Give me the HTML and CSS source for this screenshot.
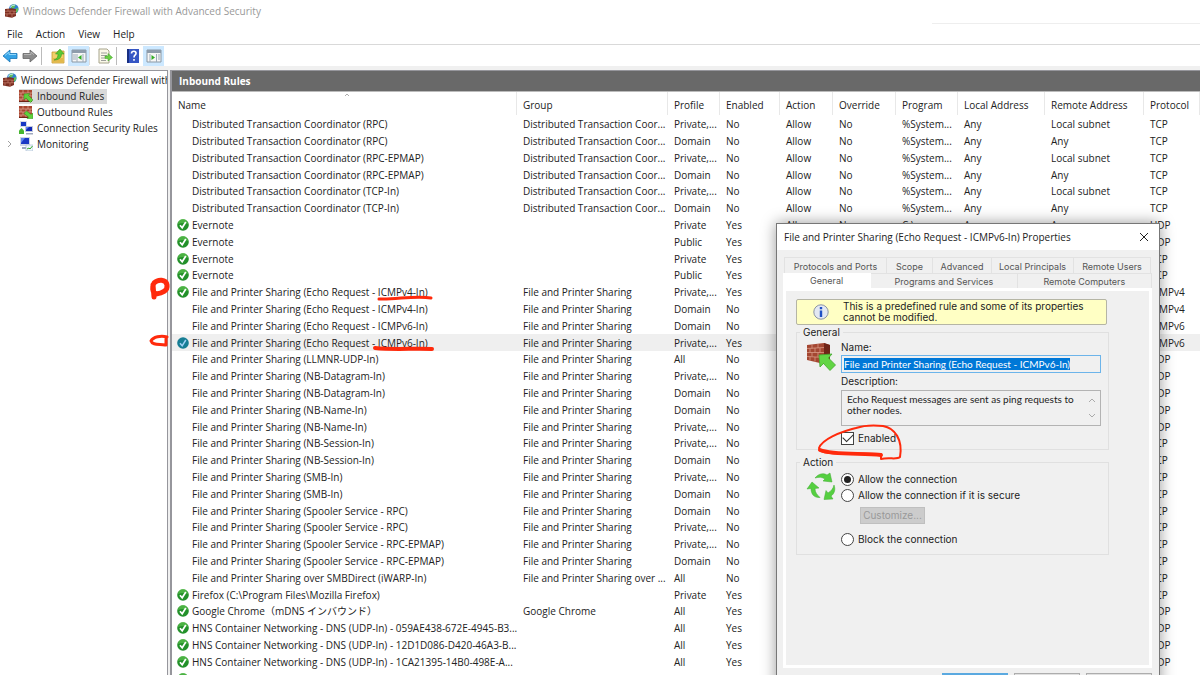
FILE: index.html
```html
<!DOCTYPE html>
<html lang="en">
<head>
<meta charset="utf-8">
<title>Windows Defender Firewall with Advanced Security</title>
<link rel="stylesheet" href="styles.css">
</head>
<body>
<svg class="defs" aria-hidden="true">
  <symbol id="wall" viewBox="0 0 14 14">
    <path d="M0 1h13v12H0z" fill="#a8452f"/>
    <path d="M0 4h13M0 7h13M0 10h13M4 1v3M9 1v3M2 4v3M7 4v3M11 4v3M4 7v3M9 7v3M2 10v3M7 10v3" stroke="#d9a190" stroke-width=".8"/>
    <path d="M0 12.500h13" stroke="#6c2417"/>
  </symbol>
  <symbol id="firewall" viewBox="0 0 14 14">
    <circle cx="8.800" cy="5" r="4.800" fill="#2f7fd0"/>
    <path d="M6 1.500c2-1.500 4-1 4.500 0L9 4 6.500 5zM10 5l3-1c.8 2-.4 4-2 5z" fill="#63c25a"/>
    <path d="M5 3.500Q7 .8 10 1" stroke="#c9e9fb" fill="none"/>
    <path d="M0 5l7-.8 4 1V12l-4 1.700L0 12.600z" fill="#7c2f22"/>
    <path d="M0 7.300l7-.3 4 .3M0 9.800h11M3 5v2.300M5 7.300v2.500M2 10v2.600M7 10v3.500M9 7v3" stroke="#c98170" stroke-width=".7" fill="none"/>
  </symbol>
  <symbol id="ok" viewBox="0 0 12 12">
    <circle cx="6" cy="6" r="5.800" fill="#23912a"/>
    <path d="M1 5a5 5 0 0 1 10 0Q6 3 1 5" fill="#5cc04f" opacity=".7"/>
    <path d="M3 6.200l2.200 2.600L8.800 3" fill="none" stroke="#fff" stroke-width="1.700"/>
  </symbol>
  <symbol id="okblue" viewBox="0 0 12 12">
    <circle cx="6" cy="6" r="5.800" fill="#167d94"/>
    <path d="M3 6.200l2.200 2.600L8.800 3" fill="none" stroke="#9fd0f5" stroke-width="1.500"/>
  </symbol>
  <symbol id="pc" viewBox="0 0 14 14">
    <path d="M1 0h7v6H1z" fill="#d5dae8"/><path d="M2 1h5v4H2z" fill="#1738c4"/>
    <path d="M6 5h8v6H6z" fill="#c3cadc"/><path d="M7 6h6v4H7z" fill="#1128b4"/>
    <path d="M7 6h3l-3 3z" fill="#5c80ee"/><path d="M7 12h7v1.500H7z" fill="#9fa8bd"/>
  </symbol>
</svg>

<header class="titlebar">
  <svg class="ico14"><use href="#firewall"/></svg>
  <h1 class="title">Windows Defender Firewall with Advanced Security</h1>
</header>
<nav class="menubar">
  <button class="menu">File</button><button class="menu">Action</button><button class="menu">View</button><button class="menu">Help</button>
</nav>
<div class="toolbar">
  <button class="tool nav" aria-label="Back"><svg class="ico16" viewBox="0 0 16 16"><path d="M1 8l7-6v3.500h7v5H8V14z" fill="#35a3e6" stroke="#1673b5" stroke-width=".8"/><path d="M3 7.500L7 4v2.500h7" stroke="#8fd6fa" fill="none"/></svg></button>
  <button class="tool nav" aria-label="Forward"><svg class="ico16" viewBox="0 0 16 16"><path d="M15 8L8 2v3.500H1v5h7V14z" fill="#8d8d8d" stroke="#666" stroke-width=".8"/><path d="M2 6.500h7V4l3 2.800" stroke="#b5b5b5" fill="none"/></svg></button>
  <span class="divider"></span>
  <button class="tool" aria-label="Up one level"><svg class="ico16" viewBox="0 0 16 16"><path d="M2 4h5l1-1h6v12H2z" fill="#f1d06a" stroke="#c69b34" stroke-width=".8"/><path d="M2.500 10h11v4.500h-11z" fill="#e2b94c"/><path d="M4 12c3-1 4-3 4-6H5.500l4.500-5 4 5h-2.500c0 4-3 6-7.500 6z" fill="#59c934" stroke="#2f9420" stroke-width=".5"/></svg></button>
  <button class="tool tool-on" aria-label="Show console tree"><svg class="ico16" viewBox="0 0 16 16"><path d="M1 2h14v12H1z" fill="#f6f6f6" stroke="#8b98a4"/><path d="M1 2h14v3H1z" fill="#8e9cab"/><path d="M2 7h3M2 9h3M2 11h3M12 6v8M6 6v8" stroke="#9dabb8"/><path d="M10.500 7v5L7 9.500z" fill="#32ad25"/></svg></button>
  <span class="divider soft"></span>
  <button class="tool" aria-label="Export list"><svg class="ico16" viewBox="0 0 16 16"><path d="M2 1h8l2 2v12H2z" fill="#faf8e8" stroke="#a7a48c"/><path d="M4 5h6M4 7.500h6M4 10h4M4 12.500h5" stroke="#888" stroke-width=".8"/><path d="M8 8h3V5.500L15.500 9.500 11 13v-2.500H8z" fill="#6bd044" stroke="#389b26" stroke-width=".5"/></svg></button>
  <span class="divider"></span>
  <button class="tool" aria-label="Help topics"><svg class="ico16" viewBox="0 0 16 16"><path d="M2 1h12v14H2z" fill="#3656c4"/><path d="M2 1h2v14H2z" fill="#182f82"/><path d="M6.500 5.500c0-3 5-3 4.500 0-.3 2-2 1.500-2 4M9 11v1.800" stroke="#fff" stroke-width="1.600" fill="none"/></svg></button>
  <button class="tool tool-on" aria-label="Show action pane"><svg class="ico16" viewBox="0 0 16 16"><path d="M1 2h14v12H1z" fill="#f6f6f6" stroke="#8b98a4"/><path d="M1 2h14v3H1z" fill="#8e9cab"/><path d="M10.500 6v8M12 7h2M12 9h2M12 11h2M4 6v8" stroke="#9dabb8"/><path d="M5.500 7v5L9 9.500z" fill="#32ad25"/></svg></button>
</div>

<main class="console">
  <aside class="tree">
    <div class="node root"><svg class="ico14"><use href="#firewall"/></svg><span class="label">Windows Defender Firewall with</span></div>
    <div class="node"><span class="twist"></span><span class="pick"><svg class="ico14" viewBox="0 0 14 14"><use href="#wall"/><path d="M5 5l6-.5-1.500 1.800L14 11l-2.500 2.500-4.600-4.600L5 11z" fill="#5fd13b" stroke="#2f8d1d" stroke-width=".5"/></svg><span class="label">Inbound Rules</span></span></div>
    <div class="node"><span class="twist"></span><svg class="ico14" viewBox="0 0 14 14"><use href="#wall"/><path d="M14 13.500l-6 .3 1.500-1.800L5 8.500 7.500 6l4.600 3.600L14 8z" fill="#5fd13b" stroke="#2f8d1d" stroke-width=".5"/></svg><span class="label">Outbound Rules</span></div>
    <div class="node"><span class="twist"></span><svg class="ico14" viewBox="0 0 14 14"><use href="#pc"/><path d="M0 13V9.500L2.500 7 5 9.500V13z" fill="#45b52f"/></svg><span class="label">Connection Security Rules</span></div>
    <div class="node"><span class="twist"><svg class="chev" viewBox="0 0 5 8"><path d="M1 1l3 3-3 3" fill="none" stroke="#a0a0a0"/></svg></span><svg class="ico14" viewBox="0 0 14 14"><path d="M1 0h10v9H1z" fill="#cdd4e6"/><path d="M2 1h8v6H2z" fill="#1a37c4"/><path d="M2 1h4L2 6z" fill="#5f83ee"/><path d="M3 10h6v2H3z" fill="#9ba6bf"/><path d="M7 8h7v6H7z" fill="#eef5fb" stroke="#a3b6cc" stroke-width=".6"/><path d="M8 12l2-1 1 1 2.500-3" fill="none" stroke="#36aa2c"/></svg><span class="label">Monitoring</span></div>
  </aside>
  <section class="list">
    <h2 class="listhead">Inbound Rules</h2>
    <table class="rules">
      <colgroup><col class="c-name"><col class="c-group"><col class="c-profile"><col class="c-enabled"><col class="c-action"><col class="c-over"><col class="c-prog"><col class="c-local"><col class="c-remote"><col></colgroup>
      <thead><tr><th><svg class="sort" viewBox="0 0 6 4"><path d="M1 3l2-2 2 2" fill="none" stroke="#999" stroke-width=".8"/></svg>Name</th><th>Group</th><th>Profile</th><th>Enabled</th><th>Action</th><th>Override</th><th>Program</th><th>Local Address</th><th>Remote Address</th><th>Protocol</th></tr></thead>
      <tbody id="rows"></tbody>
    </table>
  </section>
</main>

<form class="dialog" role="dialog" aria-labelledby="dlg-title">
  <header class="dlg-head">
    <h2 class="dlg-title" id="dlg-title">File and Printer Sharing (Echo Request - ICMPv6-In) Properties</h2>
    <button type="button" class="close" aria-label="Close"><svg class="x" viewBox="0 0 10 10"><path d="M1 1l8 8M9 1L1 9" stroke="#222" fill="none"/></svg></button>
  </header>
  <div class="sheet">
    <div class="tabs tabs-back">
      <button type="button" class="tab">Protocols and Ports</button><button type="button" class="tab">Scope</button><button type="button" class="tab">Advanced</button><button type="button" class="tab">Local Principals</button><button type="button" class="tab">Remote Users</button>
    </div>
    <div class="tabs tabs-front">
      <button type="button" class="tab active">General</button><button type="button" class="tab">Programs and Services</button><button type="button" class="tab">Remote Computers</button>
    </div>
    <div class="pane">
      <div class="banner">
        <svg class="info" viewBox="0 0 16 16"><circle cx="8" cy="8" r="7.200" fill="#e3e8f2" stroke="#8a93a5"/><path d="M8 3v2.300M8 6.500V13" stroke="#1f50c4" stroke-width="2.400"/></svg>
        <p class="note">This is a predefined rule and some of its properties<br>cannot be modified.</p>
      </div>
      <fieldset class="group group-general">
        <legend>General</legend>
        <svg class="bigico" viewBox="0 0 30 30"><path d="M1 3l17-2 6 2v17l-6 2L1 18z" fill="#a44732"/><path d="M18 1l6 2v17l-6 2z" fill="#6f2518"/><path d="M1 6.500l17-1M1 10.500h17M1 14.500l17 1M6 2.500v4M12 2v4M4 6.500v4M9 6v4.500M14 6v4.500M6 10.500v4M12 10.500v4.500M4 14.500v4M9 15v4.500M14 15v5.500" stroke="#d89a86" stroke-width=".8"/><path d="M13 13l13-1-3.500 4 7 7-5.500 5.500-6.500-7L14 25z" fill="#62d544" stroke="#43a82e" stroke-width=".8"/></svg>
        <div class="fields">
          <label for="name">Name:</label>
          <input class="name" id="name" type="text" readonly value="File and Printer Sharing (Echo Request - ICMPv6-In)">
          <label for="desc">Description:</label>
          <div class="descbox">
            <textarea class="desc" id="desc" readonly rows="2">Echo Request messages are sent as ping requests to
other nodes.</textarea>
            <span class="scroll"><svg class="arrow" viewBox="0 0 6 4"><path d="M0 4l3-3 3 3" fill="none" stroke="#aaa"/></svg><svg class="arrow" viewBox="0 0 6 4"><path d="M0 0l3 3 3-3" fill="none" stroke="#aaa"/></svg></span>
          </div>
          <label class="choice"><input type="checkbox" class="check" checked>Enabled</label>
        </div>
      </fieldset>
      <fieldset class="group group-action">
        <legend>Action</legend>
        <svg class="bigico" viewBox="0 0 30 30"><g fill="#55cf40" stroke="#3fab30" stroke-width=".5"><path d="M9 7c4-5 9-5 12-3l3-2 2 9-9-1 2-2c-3-2-6-2-10-1z"/><path d="M6 11l7 6-4 .5c0 4 2 6 5 9C8 27 5 23 5 17.500l-4 .5z"/><path d="M28 14c2 5 0 9-3 11l2 3-9 .5 2-9 2 2.500c3-2 5-4 6-8z"/></g></svg>
        <div class="fields">
          <label class="choice"><input type="radio" name="action" class="radio" checked>Allow the connection</label>
          <label class="choice"><input type="radio" name="action" class="radio">Allow the connection if it is secure</label>
          <button type="button" class="customize" disabled>Customize...</button>
          <label class="choice"><input type="radio" name="action" class="radio">Block the connection</label>
        </div>
      </fieldset>
    </div>
    <div class="actions"><button type="button" class="act act-main" aria-label="OK"></button><button type="button" class="act" aria-label="Cancel"></button><button type="button" class="act" aria-label="Apply"></button></div>
  </div>
</form>

<svg class="marks" viewBox="0 0 1200 675" fill="none" stroke="#ff2a0c" stroke-linecap="round" stroke-linejoin="round">
  <path d="M154 283C158 279 166 279 167 285C168 291 162 293 156 294C152 292 152 287 154 283M153 285L154 297" stroke-width="5"/>
  <path d="M167 337C161 335 153 337 151 341C152 345 159 344 165 345M166 337V345" stroke-width="3"/>
  <path d="M379 299C395 300 415 295 431 298" stroke-width="3"/>
  <path d="M375 348C395 350 415 348 432 349" stroke-width="4"/>
  <path d="M860 427C838 432 822 440 819 448C820 457 850 452 881 454V459C889 457 897 460 900 457C903 440 895 428 883 426C873 425 865 425 856 428" stroke-width="2"/>
  <path d="M820 450C832 455 862 453 881 455" stroke-width="4"/>
</svg>
<script src="app.js"></script>
</body>
</html>
```
FILE: styles.css
```css
* { box-sizing: border-box; }
body { margin: 0; height: 100vh; overflow: hidden; display: flex; flex-direction: column; background: #fff; color: #222; font: 10px/16px "Open Sans", "Noto Sans CJK JP", sans-serif; position: relative; }
button, input, textarea { font: inherit; color: inherit; margin: 0; padding: 0; border: 0; background: none; }
h1, h2, p { margin: 0; font-size: inherit; font-weight: 400; }
.defs { position: absolute; width: 0; height: 0; }
.ico14 { width: 14px; height: 14px; flex: none; }
.ico16 { width: 16px; height: 16px; display: block; }

.titlebar { display: flex; align-items: center; gap: 4px; height: 21px; padding-left: 5px; flex: none; }
.titlebar::after { content: ""; width: 268px; height: 1px; margin: 0 0 -3px auto; align-self: flex-end; background: #eee; }
.title { color: #999; }
.menubar { display: flex; align-items: center; gap: 13px; height: 24px; padding: 3px 7px 0; border-bottom: 1px solid #d9d9d9; flex: none; }
.toolbar { display: flex; align-items: center; height: 21px; flex: none; }
.tool { width: 21px; height: 20px; display: grid; place-items: center; }
.nav { width: 20px; }
.tool-on { background: #cce8ff; }
.divider { width: 1px; height: 18px; background: #bbb; margin: 0 5px 0 1px; }
.soft { background: #ddd; margin: 0 4px 0 0; }

.console { flex: 1; display: flex; min-height: 0; padding-top: 4px; background: #f0f0f0; gap: 2px; }
.tree { width: 168px; flex: none; background: #fff; border-top: 1px solid #96969c; border-right: 1px solid #96969c; padding-top: 1px; overflow: hidden; }
.node { display: flex; align-items: center; gap: 4px; height: 16px; white-space: nowrap; }
.root { padding-left: 3px; }
.twist { width: 15px; flex: none; display: flex; padding-left: 7px; }
.pick { display: flex; align-items: center; gap: 4px; height: 15px; padding-right: 3px; background: #d9d9d9; }
.chev { width: 5px; height: 8px; }
.list { flex: 1; min-width: 0; background: #fff; border-top: 1px solid #96969c; border-left: 2px solid #96969c; overflow: hidden; }
.listhead { height: 21px; line-height: 20px; padding-left: 7px; background: #696969; color: #fff; font-weight: 700; border-bottom: 1px solid #bbb; }

.rules { width: 100%; table-layout: fixed; border-collapse: separate; border-spacing: 0; }
.c-name { width: 345px; }
.c-group { width: 151px; }
.c-profile { width: 52px; }
.c-enabled { width: 60px; }
.c-action { width: 53px; }
.c-over { width: 63px; }
.c-prog { width: 62px; }
.c-local { width: 87px; }
.c-remote { width: 99px; }
.rules th { height: 23px; padding: 2px 0 0 6px; border-right: 1px solid #e8e8e8; text-align: left; font-weight: 400; position: relative; white-space: nowrap; }
.rules td { height: 17px; line-height: 16px; padding: 0 0 0 6px; white-space: nowrap; }
.rules tbody tr:nth-child(5n) td { height: 16px; }
.rules td:first-child { padding-left: 5px; }
.sort { position: absolute; left: 50%; top: 1px; width: 6px; height: 4px; }
.rule { display: flex; align-items: center; gap: 3px; height: 16px; }
.state { width: 12px; height: 12px; flex: none; }
.current td { background: #efefef; }

.dialog { position: absolute; left: 776px; top: 223px; width: 384px; height: 480px; background: #f0f0f0; border: 1px solid #777; box-shadow: 0 0 14px rgba(0,0,0,.4); font: 10px/11px Inter, "Noto Sans CJK JP", sans-serif; }
.dlg-head { height: 26px; background: #fff; display: flex; align-items: center; justify-content: space-between; padding: 0 10px 0 7px; font: 10px/16px "Open Sans", sans-serif; }
.close { width: 10px; height: 10px; }
.x { width: 10px; height: 10px; display: block; }
.sheet { padding: 7px 7px 0 6px; }
.tabs { display: grid; }
.tabs-back { grid-template-columns: 102fr 46fr 59fr 82fr 77fr; margin: 0 1px; border-left: 1px solid #e2e2e2; }
.tabs-front { grid-template-columns: 88fr 146fr 134fr; }
.tab { height: 16px; padding-top: 1px; border: 1px solid #e2e2e2; border-width: 1px 1px 0 0; color: #555; font-size: 9px; white-space: nowrap; }
.tabs-front .tab { height: 15px; }
.tabs-front .active { background: #fff; border-color: #fff; padding: 0 0 2px; }
.pane { height: 380px; border: 3px solid #fff; padding: 8px 40px 0 10px; }
.banner { display: flex; align-items: center; gap: 14px; height: 26px; padding-left: 16px; background: #ffffc4; border: 1px solid #b5b5a5; border-radius: 2px; margin-right: 2px; }
.info { width: 16px; height: 16px; }
.group { position: relative; display: flex; gap: 5px; margin: 2px 0 0; padding: 4px 7px 0 9px; border: 1px solid #e0e0e0; min-width: 0; }
.group legend { padding: 0 3px; margin-left: -6px; }
.group-general { height: 123px; }
.group-action { height: 98px; margin-top: 7px; padding-top: 3px; }
.bigico { width: 30px; height: 30px; flex: none; }
.fields { flex: 1; min-width: 0; display: flex; flex-direction: column; align-items: stretch; }
.name { height: 18px; margin: 2px 0 3px; padding: 0 2px; border: 1px solid #6cb4ea; font-family: Lato, sans-serif; }
.name::selection { background: #0078d7; color: #fff; }
.descbox { display: flex; height: 36px; margin: 3px 0 4px; border: 1px solid #b3b3b3; }
.desc { flex: 1; min-width: 0; resize: none; overflow: hidden; padding: 3px 0 0 5px; white-space: pre; outline: 0; font-family: Lato, sans-serif; }
.name:focus { outline: 0; }
.scroll { width: 16px; display: flex; flex-direction: column; justify-content: space-between; align-items: center; padding: 7px 0; }
.arrow { width: 6px; height: 4px; }
.choice { display: flex; align-items: center; gap: 4px; height: 16px; }
.check, .radio { appearance: none; width: 13px; height: 13px; background: #fff; border: 1px solid #444; flex: none; display: grid; place-items: center; }
.radio { border-radius: 50%; }
.radio:checked::after { content: ""; width: 7px; height: 7px; border-radius: 50%; background: #222; }
.check:checked::after { content: ""; width: 9px; height: 5px; border: solid #333; border-width: 0 0 1px 1px; transform: rotate(-45deg) translate(1px, -1px); }
.customize { width: 65px; height: 17px; background: #ccc; color: #999; margin: 4px 0 7px 19px; border: 1px solid #bfbfbf; }
.actions { display: flex; justify-content: flex-end; gap: 6px; padding-top: 5px; }
.act { width: 66px; height: 20px; background: #e1e1e1; border: 1px solid #adadad; }
.act-main { border: 2px solid #5aa9e0; }
.marks { position: absolute; left: 0; top: 0; width: 1200px; height: 675px; pointer-events: none; }
```
FILE: app.js
```js
const dtc = "Distributed Transaction Coor...";
const fps = "File and Printer Sharing";
const tail = (remote) => ["Allow", "No", "%System...", "Any", remote];

// name, group, profile, enabled, protocol, icon, remaining columns
const rules = [
  ["Distributed Transaction Coordinator (RPC)", dtc, "Private,...", "No", "TCP", "", tail("Local subnet")],
  ["Distributed Transaction Coordinator (RPC)", dtc, "Domain", "No", "TCP", "", tail("Any")],
  ["Distributed Transaction Coordinator (RPC-EPMAP)", dtc, "Private,...", "No", "TCP", "", tail("Local subnet")],
  ["Distributed Transaction Coordinator (RPC-EPMAP)", dtc, "Domain", "No", "TCP", "", tail("Any")],
  ["Distributed Transaction Coordinator (TCP-In)", dtc, "Private,...", "No", "TCP", "", tail("Local subnet")],
  ["Distributed Transaction Coordinator (TCP-In)", dtc, "Domain", "No", "TCP", "", tail("Any")],
  ["Evernote", "", "Private", "Yes", "UDP", "ok", ["Allow", "No", "C:\\progra...", "Any", "Any"]],
  ["Evernote", "", "Public", "Yes", "UDP", "ok"],
  ["Evernote", "", "Private", "Yes", "TCP", "ok"],
  ["Evernote", "", "Public", "Yes", "TCP", "ok"],
  [fps + " (Echo Request - ICMPv4-In)", fps, "Private,...", "Yes", "ICMPv4", "ok"],
  [fps + " (Echo Request - ICMPv4-In)", fps, "Domain", "No", "ICMPv4", ""],
  [fps + " (Echo Request - ICMPv6-In)", fps, "Domain", "No", "ICMPv6", ""],
  [fps + " (Echo Request - ICMPv6-In)", fps, "Private,...", "Yes", "ICMPv6", "okblue"],
  [fps + " (LLMNR-UDP-In)", fps, "All", "No", "UDP", ""],
  [fps + " (NB-Datagram-In)", fps, "Private,...", "No", "UDP", ""],
  [fps + " (NB-Datagram-In)", fps, "Domain", "No", "UDP", ""],
  [fps + " (NB-Name-In)", fps, "Domain", "No", "UDP", ""],
  [fps + " (NB-Name-In)", fps, "Private,...", "No", "UDP", ""],
  [fps + " (NB-Session-In)", fps, "Private,...", "No", "TCP", ""],
  [fps + " (NB-Session-In)", fps, "Domain", "No", "TCP", ""],
  [fps + " (SMB-In)", fps, "Private,...", "No", "TCP", ""],
  [fps + " (SMB-In)", fps, "Domain", "No", "TCP", ""],
  [fps + " (Spooler Service - RPC)", fps, "Domain", "No", "TCP", ""],
  [fps + " (Spooler Service - RPC)", fps, "Private,...", "No", "TCP", ""],
  [fps + " (Spooler Service - RPC-EPMAP)", fps, "Private,...", "No", "TCP", ""],
  [fps + " (Spooler Service - RPC-EPMAP)", fps, "Domain", "No", "TCP", ""],
  [fps + " over SMBDirect (iWARP-In)", fps + " over ...", "All", "No", "TCP", ""],
  ["Firefox (C:\\Program Files\\Mozilla Firefox)", "", "Private", "Yes", "TCP", "ok"],
  ["Google Chrome（mDNS インバウンド）", "Google Chrome", "All", "Yes", "UDP", "ok"],
  ["HNS Container Networking - DNS (UDP-In) - 059AE438-672E-4945-B3...", "", "All", "Yes", "UDP", "ok"],
  ["HNS Container Networking - DNS (UDP-In) - 12D1D086-D420-46A3-B...", "", "All", "Yes", "UDP", "ok"],
  ["HNS Container Networking - DNS (UDP-In) - 1CA21395-14B0-498E-A...", "", "All", "Yes", "UDP", "ok"],
  ["HNS Container Networking - DNS (UDP-In) - 264745C2-F1BC-4FF7...", "", "All", "Yes", "UDP", "ok"],
];

document.getElementById("rows").innerHTML = rules.map(([name, group, profile, on, proto, icon, rest]) => {
  const mark = icon ? `<use href="#${icon}"/>` : "";
  const cells = [group, profile, on, ...(rest || ["", "", "", "", ""]), proto];
  return `<tr${icon === "okblue" ? ' class="current"' : ""}><td><div class="rule"><svg class="state">${mark}</svg>${name}</div></td>` +
    cells.map((c) => `<td>${c}</td>`).join("") + "</tr>";
}).join("");

const nameBox = document.getElementById("name");
nameBox.focus();
nameBox.select();
```
